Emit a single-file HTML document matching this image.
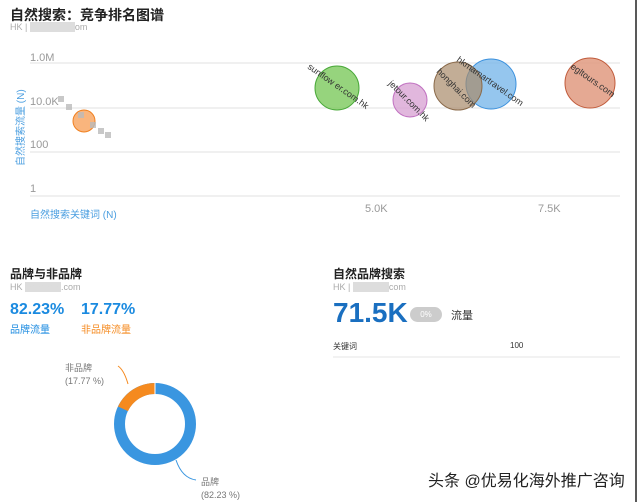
<!DOCTYPE html>
<html><head><meta charset="utf-8"><style>
body{margin:0;width:640px;height:502px;background:#fff;overflow:hidden;position:relative;font-family:"Liberation Sans","Noto Sans CJK SC",sans-serif}
.a{position:absolute;white-space:nowrap}
</style></head><body>
<svg width="640" height="502" style="position:absolute;left:0;top:0" font-family="Liberation Sans, Noto Sans CJK SC, sans-serif">
<line x1="636" y1="0" x2="636" y2="502" stroke="#222" stroke-width="1.5"/>
<g stroke="#e2e2e2" stroke-width="1">
<line x1="30" y1="63" x2="620" y2="63"/><line x1="30" y1="108" x2="620" y2="108"/>
<line x1="30" y1="152" x2="620" y2="152"/><line x1="30" y1="196" x2="620" y2="196"/>
</g>
<g fill="#999" font-size="11">
<text x="30" y="61">1.0M</text><text x="30" y="105">10.0K</text><text x="30" y="148">100</text><text x="30" y="192">1</text>
<text x="365" y="212">5.0K</text><text x="538" y="212">7.5K</text>
</g>
<text x="30" y="218" fill="#4a9ee0" font-size="10">自然搜索关键词 (N)</text>
<text transform="translate(24,166) rotate(-90)" fill="#4a9ee0" font-size="10">自然搜索流量 (N)</text>
<circle cx="84" cy="121" r="11" fill="#f7a35c" fill-opacity=".8" stroke="#f08020"/>
<g fill="#bbb" opacity=".8"><rect x="58" y="96" width="6" height="6"/><rect x="66" y="104" width="6" height="6"/><rect x="78" y="112" width="6" height="6"/><rect x="90" y="122" width="6" height="6"/><rect x="98" y="128" width="6" height="6"/><rect x="105" y="132" width="6" height="6"/></g>
<circle cx="337" cy="88" r="22" fill="#7cc95c" fill-opacity=".8" stroke="#4aa93a"/>
<circle cx="410" cy="100" r="17" fill="#d9a5d5" fill-opacity=".8" stroke="#c070c0"/>
<circle cx="491" cy="84" r="25" fill="#7ab8ea" fill-opacity=".8" stroke="#3a90dd"/>
<circle cx="458" cy="86" r="24" fill="#a88a6a" fill-opacity=".7" stroke="#8a6a4a"/>
<circle cx="590" cy="83" r="25" fill="#e09a80" fill-opacity=".85" stroke="#c05a3a"/>
<g fill="#333" font-size="9">
<text transform="translate(307,68) rotate(35)">sunflow er.com.hk</text>
<text transform="translate(388,84) rotate(45)">jetour.com.hk</text>
<text transform="translate(436,72) rotate(45)">honghai.com</text>
<text transform="translate(456,61) rotate(35)">hkmamartravel.com</text>
<text transform="translate(570,68) rotate(35)">egltours.com</text>
</g>
<circle cx="155" cy="424" r="35.5" fill="none" stroke="#3a96e0" stroke-width="11"/>
<path d="M155 388.5 A35.5 35.5 0 0 0 123 408.8" fill="none" stroke="#f58a1f" stroke-width="11"/>
<line x1="155" y1="382" x2="155" y2="394" stroke="#fff" stroke-width="1"/>
<path d="M118 366 Q124 370 128 384" fill="none" stroke="#f58a1f"/>
<path d="M176 460 Q182 478 196 480" fill="none" stroke="#3a96e0"/>
<line x1="333" y1="357" x2="620" y2="357" stroke="#eee" stroke-width="1.5"/>
</svg>
<div class="a" style="left:10px;top:5px;font-size:14px;font-weight:bold;color:#222">自然搜索：竞争排名图谱</div>
<div class="a" style="left:10px;top:22px;font-size:9px;color:#aaa">HK | <span style="background:#ddd;color:#ddd">xxxxxxxxxx</span>om</div>
<div class="a" style="left:10px;top:265px;font-size:12px;font-weight:bold;color:#222">品牌与非品牌</div>
<div class="a" style="left:10px;top:282px;font-size:9px;color:#aaa">HK <span style="background:#ddd;color:#ddd">xxxxxxxx</span>.com</div>
<div class="a" style="left:10px;top:301px;font-size:16px;font-weight:bold;color:#1a8ae0">82.23%</div>
<div class="a" style="left:81px;top:301px;font-size:16px;font-weight:bold;color:#1a8ae0">17.77%</div>
<div class="a" style="left:10px;top:321px;font-size:10px;color:#1a8ae0">品牌流量</div>
<div class="a" style="left:81px;top:321px;font-size:10px;color:#f58a1f">非品牌流量</div>
<div class="a" style="left:65px;top:362px;font-size:9px;color:#777;line-height:13px">非品牌<br>(17.77 %)</div>
<div class="a" style="left:201px;top:476px;font-size:9px;color:#777;line-height:13px">品牌<br>(82.23 %)</div>
<div class="a" style="left:333px;top:265px;font-size:12px;font-weight:bold;color:#222">自然品牌搜索</div>
<div class="a" style="left:333px;top:282px;font-size:9px;color:#aaa">HK | <span style="background:#ddd;color:#ddd">xxxxxxxx</span>com</div>
<div class="a" style="left:333px;top:297px;font-size:28px;font-weight:bold;color:#1a6fc0">71.5K</div>
<div class="a" style="left:410px;top:307px;width:32px;height:15px;border-radius:8px;background:#ccc;color:#fff;font-size:8px;text-align:center;line-height:15px">0%</div>
<div class="a" style="left:451px;top:307px;font-size:11px;color:#333">流量</div>
<div class="a" style="left:333px;top:341px;font-size:8px;color:#333">关键词</div>
<div class="a" style="left:510px;top:341px;font-size:8px;color:#333">100</div>
<div class="a" style="left:428px;top:467px;font-size:16px;color:#222">头条 @优易化海外推广咨询</div>
</body></html>
